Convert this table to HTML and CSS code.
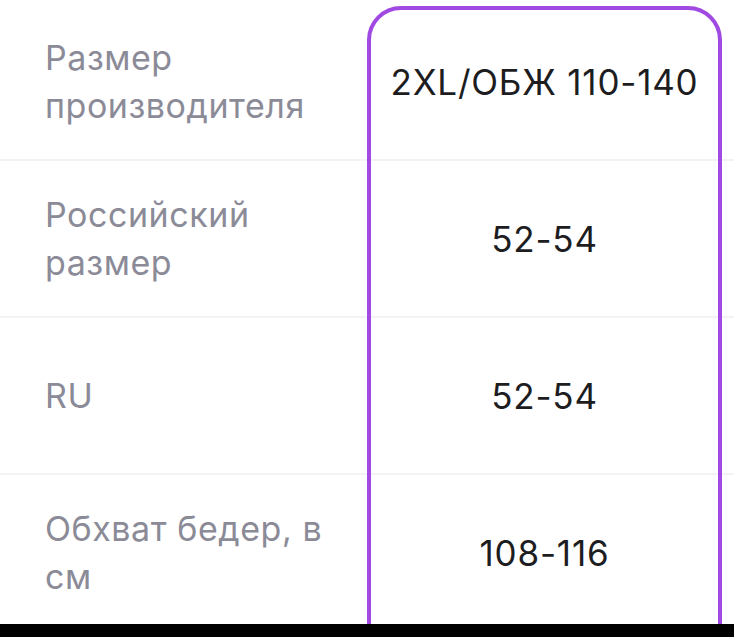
FILE: index.html
```html
<!DOCTYPE html>
<html lang="ru">
<head>
<meta charset="utf-8">
<title>Таблица размеров</title>
<link rel="stylesheet" href="styles.css">
</head>
<body>
<div class="screen">
  <div class="table">
    <div class="row">
      <div class="label">Размер<br>производителя</div>
      <div class="value">2XL/ОБЖ 110-140</div>
    </div>
    <div class="row">
      <div class="label">Российский<br>размер</div>
      <div class="value">52-54</div>
    </div>
    <div class="row">
      <div class="label">RU</div>
      <div class="value">52-54</div>
    </div>
    <div class="row">
      <div class="label">Обхват бедер, в<br>см</div>
      <div class="value">108-116</div>
    </div>
    <div class="highlight"></div>
  </div>
  <div class="navbar"></div>
</div>
</body>
</html>
```
FILE: styles.css
```css
* { box-sizing: border-box; }
html, body { margin: 0; padding: 0; background: #fff; }
body { font-family: Inter, "Noto Sans", sans-serif; }
.screen {
  width: 734px;
  height: 637px;
  display: flex;
  flex-direction: column;
  overflow: hidden;
}
.table {
  position: relative;
  flex: 1;
  overflow: hidden;
  padding-top: 4px;
}
.row {
  display: grid;
  grid-template-columns: 367px 355px 12px;
  height: 157px;
  border-bottom: 2px solid #f3f3f5;
  align-items: center;
}
.label {
  padding-left: 45px;
  font-size: 34px;
  line-height: 48px;
  color: #8b8b98;
  letter-spacing: 0.55px;
}
.value {
  text-align: center;
  font-size: 35px;
  line-height: 48px;
  color: #1d1d1f;
  letter-spacing: 0.8px;
}
.highlight {
  position: absolute;
  left: 367px;
  top: 6px;
  width: 355px;
  height: 720px;
  border: 4px solid #a04ae3;
  border-radius: 34px;
  pointer-events: none;
}
.navbar {
  height: 13px;
  background: #000;
}
```
